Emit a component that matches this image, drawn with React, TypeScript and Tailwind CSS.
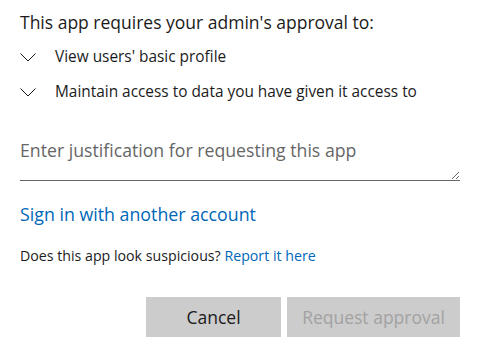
import React from 'react'

const font = { fontFamily: '"Open Sans", "Noto Sans", sans-serif' }

function Chevron() {
  return (
    <svg width="16" height="9" viewBox="0 0 16 9" className="shrink-0">
      <path d="M0.5 0.5 L8 8 L15.5 0.5" fill="none" stroke="#1b1b1b" strokeWidth="1" />
    </svg>
  )
}

export default function App() {
  const scopes = ["View users' basic profile", 'Maintain access to data you have given it access to']

  return (
    <div className="w-[490px] h-[352px] bg-white text-[#1b1b1b] overflow-hidden" style={font}>
      <div className="pl-5 pr-[30px] pt-[10px]">
        <h1 className="text-[17.5px] leading-[24px] font-normal">This app requires your admin's approval to:</h1>

        <ul className="mt-[12px] flex flex-col gap-[13px]">
          {scopes.map(s => (
            <li key={s} className="flex items-center h-[22px]">
              <div className="w-[35px] flex items-center">
                <Chevron />
              </div>
              <span className="text-[15.4px] leading-[20px]">{s}</span>
            </li>
          ))}
        </ul>

        {/* justificação */}
        <div className="mt-[30px]">
          <textarea
            placeholder="Enter justification for requesting this app"
            className="block w-full h-[48px] resize-y border-0 border-b border-[#666] outline-none text-[17.7px] leading-[24px] placeholder:text-[#666] pt-[5px] px-0"
            style={font}
          />
        </div>

        <div className="mt-[21px]">
          <a href="#" className="text-[17.8px] leading-[24px] text-[#0067b8]">Sign in with another account</a>
        </div>

        <p className="mt-[19px] text-[14.2px] leading-[20px]">
          Does this app look suspicious? <a href="#" className="text-[#0067b8]">Report it here</a>
        </p>

        <div className="mt-[31px] flex justify-end gap-[6px]">
          <button className="w-[135px] h-[40px] bg-[#cccccc] text-[17.5px] text-[#1b1b1b]" style={font}>Cancel</button>
          <button disabled className="w-[173px] h-[40px] bg-[#cccccc] text-[17.5px] text-[#a2a2a2]" style={font}>Request approval</button>
        </div>
      </div>
    </div>
  )
}
